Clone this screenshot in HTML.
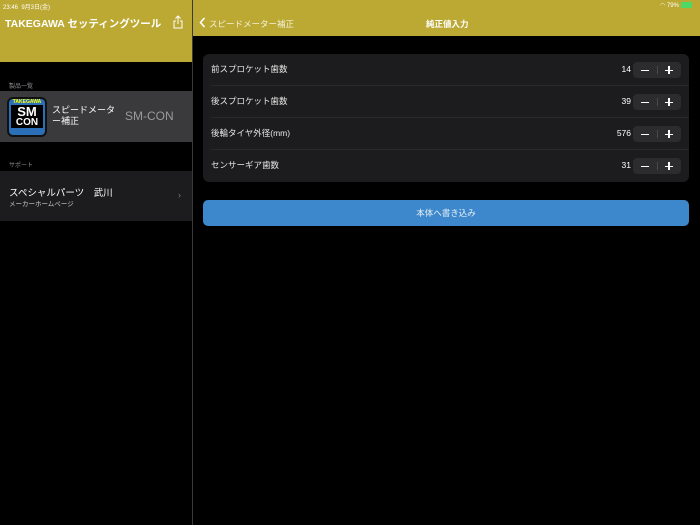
<!DOCTYPE html>
<html><head><meta charset="utf-8"><style>
*{margin:0;padding:0;box-sizing:border-box}
body{width:700px;height:525px;background:#000;font-family:"Liberation Sans","Noto Sans CJK JP",sans-serif;color:#fff;position:relative;overflow:hidden}
.abs{position:absolute}
.gold{background:#bca934}
.row{position:absolute;left:0;width:486px;height:32px}
.row .l{position:absolute;left:8px;top:9px;font-size:8.5px;color:#e6e6e6}
.row .v{position:absolute;right:58px;top:10px;font-size:8.5px}
.st{position:absolute;right:8px;top:8px;width:48px;height:16px;background:#2c2c2e;border-radius:4px}
.st i{position:absolute;left:24px;top:4px;width:1px;height:8px;background:#48484a}
.st .m{position:absolute;left:8px;top:7.5px;width:8px;height:1.2px;background:#fff}
.st .p1{position:absolute;left:32px;top:7.5px;width:8px;height:1.2px;background:#fff}
.st .p2{position:absolute;left:35.4px;top:4px;width:1.2px;height:8px;background:#fff}
.sep{position:absolute;left:8px;right:0;bottom:0;height:1px;background:#2a2a2c}
</style></head><body>
<div class="abs gold" style="left:0;top:0;width:192px;height:62px"></div>
<div class="abs gold" style="left:193px;top:0;width:507px;height:36px"></div>
<div class="abs" style="left:192px;top:0;width:1px;height:525px;background:#3a3a3a"></div>
<div class="abs" style="left:3px;top:2px;font-size:6px">23:46&nbsp;&nbsp;9月3日(金)</div>
<div class="abs" style="left:660px;top:2px;font-size:6px">◠ 79% <span style="display:inline-block;width:11px;height:6px;background:#4cd964;border-radius:1px;vertical-align:-1px"></span></div>
<div class="abs" style="left:5px;top:16px;font-size:10.5px;font-weight:bold;white-space:nowrap">TAKEGAWA セッティングツール</div>
<svg class="abs" style="left:172px;top:15px" width="12" height="14" viewBox="0 0 12 14"><path d="M6 1v8M3.5 3.5L6 1l2.5 2.5M4 6H2v7h8V6H8" fill="none" stroke="#fff" stroke-width="1"/></svg>
<div class="abs" style="left:9px;top:81px;font-size:6px;color:#8e8e93">製品一覧</div>
<div class="abs" style="left:0;top:91px;width:192px;height:51px;background:#3a3a3c"></div>
<div class="abs" style="left:7px;top:97px;width:40px;height:40px;background:#111;border-radius:6px;overflow:hidden">
<div style="margin:2px;height:36px;background:#2a6fb8;border-radius:4px;text-align:center;font-weight:bold;line-height:1">
<div style="font-size:5px;color:#ff0;padding-top:1px">TAKEGAWA</div>
<div style="font-size:13px;color:#fff;background:#000;margin:0 2px">SM</div>
<div style="font-size:10px;color:#fff;background:#000;margin:0 2px">CON</div></div></div>
<div class="abs" style="left:52px;top:105px;font-size:9px;line-height:11px">スピードメータ<br>ー補正</div>
<div class="abs" style="left:125px;top:109px;font-size:12px;color:#9a9a9a">SM-CON</div>
<div class="abs" style="left:9px;top:160px;font-size:6px;color:#8e8e93">サポート</div>
<div class="abs" style="left:0;top:171px;width:192px;height:50px;background:#1c1c1e"></div>
<div class="abs" style="left:9px;top:185px;font-size:9.5px">スペシャルパーツ　武川</div>
<div class="abs" style="left:9px;top:198px;font-size:6.5px;color:#ccc">メーカーホームページ</div>
<div class="abs" style="left:178px;top:190px;font-size:9px;color:#777">›</div>
<svg class="abs" style="left:199px;top:17px" width="7" height="11" viewBox="0 0 7 11"><path d="M5.5 1L1.5 5.5 5.5 10" fill="none" stroke="#fff" stroke-width="1.6"/></svg>
<div class="abs" style="left:209px;top:18px;font-size:8.5px;color:#f4f0d8">スピードメーター補正</div>
<div class="abs" style="left:426px;top:18px;font-size:8.5px;font-weight:bold">純正値入力</div>
<div class="abs" style="left:203px;top:54px;width:486px;height:128px;background:#1c1c1e;border-radius:6px">
<div class="row" style="top:0"><div class="l">前スプロケット歯数</div><div class="v">14</div><div class="st"><b class="m"></b><i></i><b class="p1"></b><b class="p2"></b></div><div class="sep"></div></div>
<div class="row" style="top:32px"><div class="l">後スプロケット歯数</div><div class="v">39</div><div class="st"><b class="m"></b><i></i><b class="p1"></b><b class="p2"></b></div><div class="sep"></div></div>
<div class="row" style="top:64px"><div class="l">後輪タイヤ外径(mm)</div><div class="v">576</div><div class="st"><b class="m"></b><i></i><b class="p1"></b><b class="p2"></b></div><div class="sep"></div></div>
<div class="row" style="top:96px"><div class="l">センサーギア歯数</div><div class="v">31</div><div class="st"><b class="m"></b><i></i><b class="p1"></b><b class="p2"></b></div></div>
</div>
<div class="abs" style="left:203px;top:200px;width:486px;height:26px;background:#3d88cc;border-radius:5px;text-align:center;line-height:26px;font-size:8.5px;color:#e8f0f8">本体へ書き込み</div>
</body></html>
